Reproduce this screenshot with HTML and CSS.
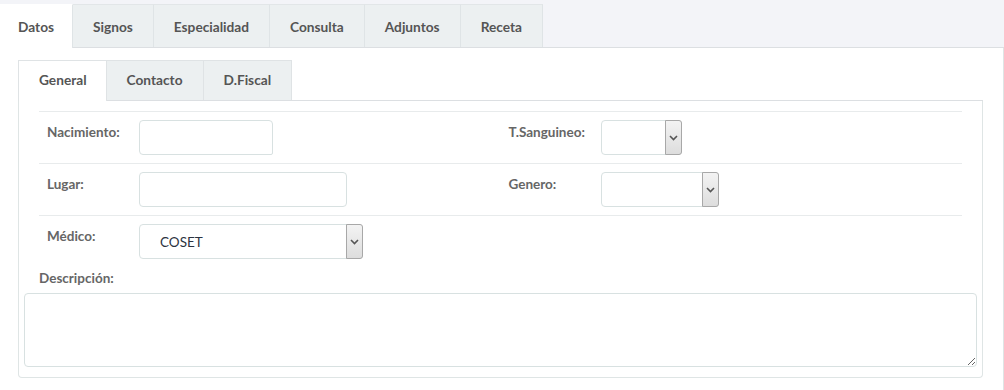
FILE: index.html
```html
<!DOCTYPE html>
<html lang="es">
<head>
  <meta charset="UTF-8">
  <meta name="viewport" content="width=device-width, initial-scale=1.0">
  <title>Paciente - Datos</title>
  <link rel="stylesheet" href="styles.css">
</head>
<body>

  <ul class="tab-bar">
    <li class="tab active">Datos</li>
    <li class="tab">Signos</li>
    <li class="tab">Especialidad</li>
    <li class="tab">Consulta</li>
    <li class="tab">Adjuntos</li>
    <li class="tab">Receta</li>
  </ul>

  <div class="panel">
    <ul class="sub-tabs">
      <li class="sub-tab active">General</li>
      <li class="sub-tab">Contacto</li>
      <li class="sub-tab">D.Fiscal</li>
    </ul>

    <div class="sub-panel">
      <div class="rows">
        <div class="row">
          <div class="field">
            <label for="nacimiento">Nacimiento:</label>
            <input type="text" id="nacimiento" class="input small">
          </div>
          <div class="field">
            <label for="sangre">T.Sanguineo:</label>
            <div class="select xs">
              <select id="sangre"></select>
              <span class="arrow"><svg width="9" height="6" viewBox="0 0 9 6"><path d="M1 1l3.5 3.5L8 1" fill="none" stroke="#555" stroke-width="1.6"/></svg></span>
            </div>
          </div>
        </div>

        <div class="row">
          <div class="field">
            <label for="lugar">Lugar:</label>
            <input type="text" id="lugar" class="input medium">
          </div>
          <div class="field">
            <label for="genero">Genero:</label>
            <div class="select sm">
              <select id="genero"></select>
              <span class="arrow"><svg width="9" height="6" viewBox="0 0 9 6"><path d="M1 1l3.5 3.5L8 1" fill="none" stroke="#555" stroke-width="1.6"/></svg></span>
            </div>
          </div>
        </div>

        <div class="row last">
          <div class="field">
            <label for="medico">Médico:</label>
            <div class="select lg">
              <select id="medico"><option>COSET</option></select>
              <span class="arrow"><svg width="9" height="6" viewBox="0 0 9 6"><path d="M1 1l3.5 3.5L8 1" fill="none" stroke="#555" stroke-width="1.6"/></svg></span>
            </div>
          </div>
        </div>
      </div>

      <label class="desc-label" for="descripcion">Descripción:</label>
      <textarea id="descripcion" class="desc"></textarea>
    </div>
  </div>

</body>
</html>
```

FILE: styles.css
```css
body {
  font-family: "Source Sans Pro", Lato, "Liberation Sans", sans-serif;
  margin: 0;
  padding: 0;
  background-color: #fff;
  color: #555;
}
ul {
  list-style-type: none;
  margin: 0;
  padding: 0;
}
.tab-bar {
  display: flex;
  background-color: #f3f4f8;
  padding-top: 4px;
  border-bottom: 1px solid #dcdfe2;
  height: 43px;
}
.tab {
  height: 43px;
  line-height: 43px;
  padding: 0 20px;
  font-size: 13.7px;
  font-weight: 700;
  background-color: #ecf0f1;
  border-top: 1px solid #e2e6e8;
  border-right: 1px solid #dfe4e6;
  box-sizing: border-box;
  color: #555;
}
.tab.active {
  background-color: #fff;
  border-top-color: #fff;
  height: 44px;
  padding: 0 18px;
}
.panel {
  border-right: 1px solid #dfe5e5;
  padding: 12px 20px 30px 18px;
}
.sub-tabs {
  display: flex;
  border-bottom: 1px solid #dcdfe2;
  height: 40px;
}
.sub-tab {
  height: 40px;
  line-height: 38px;
  padding: 0 20px;
  font-size: 13.7px;
  font-weight: 700;
  background-color: #ecf0f1;
  border-top: 1px solid #dfe3e5;
  border-right: 1px solid #dfe3e5;
  box-sizing: border-box;
}
.sub-tab.active {
  background-color: #fff;
  border-left: 1px solid #dfe3e5;
  height: 41px;
  padding: 0 19px 0 20px;
}
.sub-panel {
  border: 1px solid #dfe5e5;
  border-top: none;
  border-radius: 0 0 4px 4px;
  padding: 10px 5px 10px 5px;
}
.rows {
  margin: 0 15px;
  border-top: 1px solid #e8ebec;
}
.row {
  display: flex;
  height: 43px;
  border-bottom: 1px solid #e8ebec;
  padding-top: 8px;
}
.row.last {
  border-bottom: none;
}
.field {
  display: flex;
  align-items: flex-start;
  width: 462px;
}
.field label {
  width: 92px;
  padding: 4px 0 0 8px;
  font-size: 13.5px;
  font-weight: 700;
  color: #666;
}
.input {
  height: 35px;
  box-sizing: border-box;
  border: 1px solid #d8e1e1;
  border-radius: 4px;
  margin: 0;
  padding: 0 10px;
}
.input.small {
  width: 134px;
  border-bottom-right-radius: 2px;
}
.input.medium {
  width: 208px;
}
.select {
  position: relative;
  height: 35px;
}
.select select {
  appearance: none;
  -webkit-appearance: none;
  width: 100%;
  height: 35px;
  border: 1px solid #d8e1e1;
  border-radius: 4px;
  background-color: #fff;
  padding: 0 0 0 20px;
  font-family: "Source Sans Pro", Lato, "Liberation Sans", sans-serif;
  font-size: 13.5px;
  color: #2c3340;
  margin: 0;
}
.select.xs {
  width: 81px;
}
.select.sm {
  width: 118px;
}
.select.lg {
  width: 224px;
}
.arrow {
  position: absolute;
  right: 0;
  top: 0;
  width: 17px;
  height: 35px;
  box-sizing: border-box;
  border: 1px solid #a8a8a8;
  border-radius: 0 3px 3px 0;
  background: linear-gradient(#f3f3f3, #dddddd);
  display: flex;
  align-items: center;
  justify-content: center;
}
.desc-label {
  display: block;
  margin: 3px 0 0 15px;
  height: 23px;
  font-size: 13.5px;
  font-weight: 700;
  color: #666;
}
.desc {
  display: block;
  width: 953px;
  height: 74px;
  box-sizing: border-box;
  border: 1px solid #d8e1e1;
  border-radius: 4px;
  margin: 0;
}
```
